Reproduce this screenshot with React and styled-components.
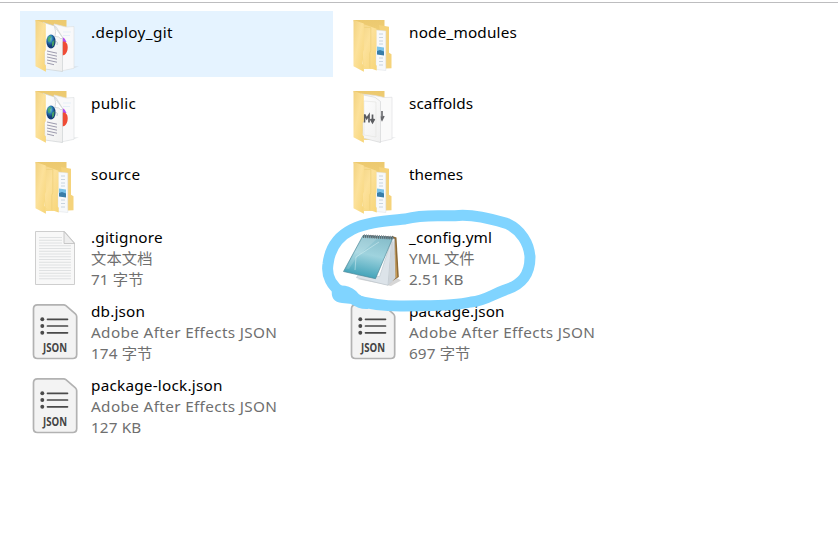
import React from "react";
import styled, { createGlobalStyle } from "styled-components";

const GlobalStyle = createGlobalStyle`
  body { margin: 0; background: #fff; }
`;

const Pane = styled.main`
  position: relative;
  box-sizing: border-box;
  width: 838px;
  height: 556px;
  overflow: hidden;
  padding: 9px 0 0 20px;
  border-top: 2px solid transparent;
  background: linear-gradient(#bdbdbf, #bdbdbf) 0 0 / 100% 1px no-repeat #fff;
  font-family: "Noto Sans", "Open Sans", "Noto Sans CJK SC", sans-serif;
`;

const Grid = styled.div`
  display: grid;
  grid-template-columns: 313px 313px;
  grid-template-rows: repeat(3, 66px) repeat(3, 69px);
  gap: 5px;
`;

const Item = styled.div`
  display: flex;
  background: ${(p) => (p.$active ? "#e5f3ff" : "transparent")};
`;

const Icon = styled.svg`
  flex: none;
  width: 71px;
  height: 66px;
  overflow: visible;
`;

const Labels = styled.div`
  padding-top: ${(p) => (p.$folder ? 11 : 3)}px;
`;

const Line = styled.div`
  height: 21px;
  line-height: 21px;
  font-size: 15.3px;
  letter-spacing: ${(p) => p.$spacing || 0}px;
  white-space: nowrap;
  color: ${(p) => (p.$muted ? "#6f6f6f" : "#000")};
`;

const Marker = styled.svg`
  position: absolute;
  left: 0;
  top: -2px;
  width: 838px;
  height: 556px;
  pointer-events: none;
`;

const HiddenSvg = styled.svg`
  position: absolute;
`;

const Defs = () => (
  <HiddenSvg width="0" height="0">
    <defs>
      <linearGradient id="flap" x1="0" y1="0" x2="1" y2="1">
        <stop offset="0" stopColor="#f2d281" />
        <stop offset=".45" stopColor="#fce19a" />
        <stop offset="1" stopColor="#f7d578" />
      </linearGradient>
      <linearGradient id="back" x1="0" y1="0" x2="0" y2="1">
        <stop offset="0" stopColor="#ecc96f" />
        <stop offset="1" stopColor="#f9dc8b" />
      </linearGradient>
      <linearGradient id="sheet" x1="0" y1="0" x2="1" y2="1">
        <stop offset="0" stopColor="#fff" />
        <stop offset="1" stopColor="#efefef" />
      </linearGradient>
      <radialGradient id="globe" cx=".4" cy=".3">
        <stop offset="0" stopColor="#8ed4ee" />
        <stop offset=".6" stopColor="#2476ad" />
        <stop offset="1" stopColor="#123c79" />
      </radialGradient>
      <linearGradient id="cover" x1=".65" y1="0" x2=".4" y2="1">
        <stop offset="0" stopColor="#86bdca" />
        <stop offset=".45" stopColor="#9fd3de" />
        <stop offset="1" stopColor="#3a9fb6" />
      </linearGradient>
    </defs>
  </HiddenSvg>
);

const Flap = () => (
  <path d="M35.500 20l10.300 3.600v26.500l-1.200 2v12l1.300 1.300v6.400l-10.400-5.600z" fill="url(#flap)" />
);

const FolderBack = () => (
  <path d="M35.500 20h31v7l-3 42H46z" fill="url(#back)" />
);

const WebFolder = () => (
  <Icon viewBox="20 11 71 66">
    <path d="M66 70l13-3.500-5 0-9 2z" fill="#c9ced2" opacity=".6" />
    <FolderBack />
    <path d="M54 24l12 3 8-.5v41.800L61 71z" fill="#f9f9fa" stroke="#dfe2e4" strokeWidth=".7" />
    <path d="M63 35.500h7M63 32h8" stroke="#dcebf5" strokeWidth=".7" />
    <path d="M62.500 37q2.500 1 4 5h-4z" fill="#b44cee" />
    <path d="M62 42c3.500-1.500 5.700 1.500 5.700 5.500 0 4.500-2.500 8-5.700 8z" fill="#ef4b35" />
    <path d="M43 22.300l13 4.200 6.500 11v34L45 69z" fill="url(#sheet)" stroke="#c8ccce" strokeWidth=".6" />
    <path d="M54.500 26.500q2 5 .5 10 4-.5 6 2.500l1.500-1.500z" fill="#fff" stroke="#c3c7ca" strokeWidth=".6" />
    <ellipse cx="51" cy="41.500" rx="4.600" ry="6.900" fill="url(#globe)" />
    <path d="M47.500 38.500q2-3.500 4-2l-1 2v3l-2 .5zM52 42l2.500-2-.5 5-2 2z" fill="#4caa62" opacity=".85" />
    <path d="M55.500 41q3 1 1.500 4" fill="none" stroke="#9eb7c5" strokeWidth=".7" />
    <path d="M47 51l10 2.200M47 54l10 2.200M47 57l10 2.200M47 60l10 2.200M47 63l7 1.700" stroke="#85839a" strokeWidth=".8" />
    <Flap />
  </Icon>
);

const FullFolder = () => (
  <Icon viewBox="20 11 71 66">
    <FolderBack />
    <path d="M61 25l10 1.700v26l2.500 1.500v14l-6 .2z" fill="#f5d37b" />
    <path d="M58 30l9.800 1v39.500l-9.800-1z" fill="#f7f9fb" stroke="#dde1e5" strokeWidth=".5" />
    <path d="M61 34h4M61 37.500h4M61 41h4M61 44h4M61 58h4M61 61.500h4M61 65h4" stroke="#bccbd9" strokeWidth=".8" />
    <path d="M59 46.500l7 1v7l-7-.5z" fill="#7bc3ea" />
    <path d="M59 51l3-1 4 1.500v4l-7-1z" fill="#397da8" />
    <path d="M41 22.500l17.500 6.300v21.500l-1 2v12l1.200 1.500v4.700L46 66z" fill="url(#flap)" />
    <path d="M46.300 27.500l6.500-.2v23l-1 3v15" fill="none" stroke="#efd07a" strokeWidth=".8" />
    <Flap />
  </Icon>
);

const MarkdownFolder = () => (
  <Icon viewBox="20 11 71 66">
    <path d="M64 70l14-3.500-5 0-9 2z" fill="#c9ced2" opacity=".6" />
    <FolderBack />
    <path d="M43 23l14 1.500 9 2 8-.2v41.800L61 71z" fill="#fafafa" stroke="#dfe0e2" strokeWidth=".7" />
    <path d="M64 40v8m-2-3l2 4 2-4" fill="none" stroke="#66676b" strokeWidth="1.600" />
    <path d="M43 23.500l14 2.800 5.500 4.200v41L45 67z" fill="url(#sheet)" stroke="#d0d1d3" strokeWidth=".6" />
    <path d="M46 30l12 1v35l-12-2z" fill="none" stroke="#e3e3df" strokeWidth=".6" />
    <path d="M46.500 51.500v-8l2.200 4 2.300-3.500v7.500M54.500 43.500v7.500m-2-3l2 3.500 2-3.500" fill="none" stroke="#5b5c60" strokeWidth="1.700" />
    <Flap />
  </Icon>
);

const TextIcon = () => (
  <Icon viewBox="20 224 71 66">
    <path d="M35.500 231.500h29L74.500 243v41.500h-39z" fill="#f8f8f8" stroke="#c8c8c8" strokeWidth=".9" />
    <path d="M64 231.500v12h10.500z" fill="#eee" stroke="#bcbcbc" strokeWidth=".8" />
    {Array.from({ length: 16 }, (_, i) => (
      <path key={i} d={`M39 ${237.5 + i * 2.75}h${i < 3 ? 23 : 32}`} stroke="#d8dadc" strokeWidth=".8" />
    ))}
  </Icon>
);

const JsonText = styled.text`
  font: 700 12px "Open Sans", "Noto Sans", sans-serif;
  fill: #444;
`;

const JsonIcon = () => (
  <Icon viewBox="20 298 71 66">
    <path
      d="M37.500 304.800h26.200q1.200 0 2.200.8l9.500 8.200q1.300 1.200 1.300 3V354.500q0 4-4 4H37.500q-4 0-4-4v-45.700q0-4 4-4z"
      fill="#f3f3f3"
      stroke="#b2b2b2"
      strokeWidth="1.700"
    />
    <path d="M47.500 319.300h20M47.500 326h20M47.500 332.800h20" stroke="#4a4a4a" strokeWidth="1.700" strokeLinecap="round" />
    {[319.3, 326, 332.8].map((y) => (
      <circle key={y} cx="42.300" cy={y} r="1.950" fill="#4a4a4a" />
    ))}
    <JsonText x="43" y="351.500" textLength="24" lengthAdjust="spacingAndGlyphs">JSON</JsonText>
  </Icon>
);

const NotepadIcon = () => (
  <Icon viewBox="338 224 71 66">
    <path d="M357 279l34 7 10-5.500-5-3z" fill="#999" opacity=".4" />
    <path d="M392 236l4.500 1.500 2.300 39.500-6.500 4z" fill="#8d6a37" />
    <path d="M395 239l2.300 38-2 1.200z" fill="#c89b54" />
    <path d="M391 237l3.500 2 .7 39-7 7z" fill="#e9edf0" stroke="#b4b9be" strokeWidth=".6" />
    <path d="M392 239L388 285.300l-31.500-7.600 3-5 20 4z" fill="#dce3e9" stroke="#b9c3c9" strokeWidth=".6" />
    <path d="M392 242l-4 43 7-7-1.500-37z" fill="#cdd4da" />
    <path d="M363 235.500l30 1.800-17.500 41.400L343.500 271.500z" fill="url(#cover)" stroke="#51899a" strokeWidth=".7" />
    <path d="M363 237l15 1-22 20-7 11-3-.5z" fill="#fff" opacity=".15" />
    <path d="M379 242l-23 15-1 13" fill="none" stroke="#e2f6f9" strokeWidth=".7" opacity=".65" />
    {Array.from({ length: 14 }, (_, i) => (
      <path
        key={i}
        d={`M${363.5 + i * 2.15} ${238 + i * 0.12}q-.4-3.500 1-3.300 1.200.2.500 2.800`}
        fill="none"
        stroke="#535b60"
        strokeWidth=".8"
      />
    ))}
  </Icon>
);

const icons = {
  web: WebFolder,
  full: FullFolder,
  markdown: MarkdownFolder,
  text: TextIcon,
  json: JsonIcon,
  notepad: NotepadIcon,
};

const AE = "Adobe After Effects JSON";

const entries = [
  { icon: "web", name: ".deploy_git", active: true, spacing: 0.36 },
  { icon: "full", name: "node_modules", spacing: 0.18 },
  { icon: "web", name: "public", spacing: 0.25 },
  { icon: "markdown", name: "scaffolds", spacing: 0.05 },
  { icon: "full", name: "source", spacing: 0.2 },
  { icon: "full", name: "themes", spacing: 0.05 },
  { icon: "text", name: ".gitignore", spacing: 0.22, details: ["文本文档", "71 字节"] },
  { icon: "notepad", name: "_config.yml", spacing: 0.14, details: ["YML 文件", "2.51 KB"] },
  { icon: "json", name: "db.json", spacing: 0.17, details: [AE, "174 字节"] },
  { icon: "json", name: "package.json", spacing: 0.12, details: [AE, "697 字节"] },
  { icon: "json", name: "package-lock.json", spacing: 0.22, details: [AE, "127 KB"] },
];

export default function App() {
  return (
    <Pane>
      <GlobalStyle />
      <Defs />
      <Grid>
        {entries.map(({ icon, name, active, spacing, details = [] }) => {
          const Glyph = icons[icon];
          return (
            <Item key={name} $active={active}>
              <Glyph />
              <Labels $folder={!details.length}>
                <Line $spacing={spacing}>{name}</Line>
                {details.map((d) => (
                  <Line key={d} $muted $spacing={d === AE ? 0.35 : 0.1}>{d}</Line>
                ))}
              </Labels>
            </Item>
          );
        })}
      </Grid>
      <Marker viewBox="0 0 838 556">
        <path
          d="M341 292C332 286 326 276 328 264C330 247 339 236 352 229.500C367 222 386 221 405 219C425 214 440 216.500 455 215.700C474 214 491 219 507 223.500C521 230 529 243 530 257C530 276 521 285 505 290C491 295 485 301 471 302C450 307 425 305 400 306C381 306 369 304 355 300"
          fill="none"
          stroke="#80d4ff"
          strokeWidth="11"
          strokeLinecap="round"
          strokeLinejoin="round"
        />
        <path
          d="M332 289Q330 302 342 303L352 304Q358 309.500 368 309L372 300Q360 297 356 291Q347 284 337 286Z"
          fill="#80d4ff"
        />
      </Marker>
    </Pane>
  );
}
